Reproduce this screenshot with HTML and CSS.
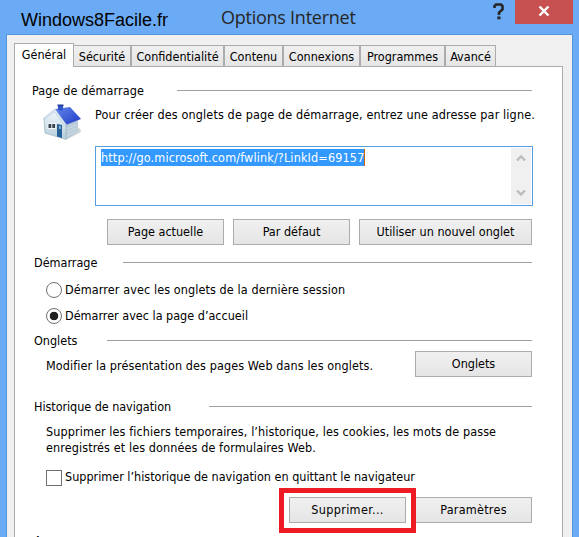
FILE: index.html
```html
<!DOCTYPE html>
<html lang="fr">
<head>
    <meta charset="UTF-8">
    <title>Options Internet</title>
    <link rel="stylesheet" href="styles.css">
</head>
<body>
    <div class="window">
        <!-- Title bar -->
        <header class="title-bar">
            <span class="site-name">Windows8Facile.fr</span>
            <span class="window-title">Options Internet</span>
            <svg class="help-icon" width="12" height="18" viewBox="0 0 12 18">
                <path d="M1.500 5V3L3 1.500h5L9.500 3v3.500L6 9.500v2.500" fill="none" stroke="#262626" stroke-width="2.600"/>
                <path d="M4.300 13.500h3.200v2.800H4.300z" fill="#262626"/>
            </svg>
            <button class="close-button">
                <svg width="12" height="10" viewBox="0 0 12 10">
                    <path d="M1.500 0.500l9 9M10.500 0.500l-9 9" stroke="#fff" stroke-width="2.400"/>
                </svg>
            </button>
        </header>

        <div class="client">
            <!-- Tabs -->
            <nav class="tabs">
                <div class="tab active"><span>Général</span></div>
                <div class="tab tab-securite"><span>Sécurité</span></div>
                <div class="tab tab-confidentialite"><span>Confidentialité</span></div>
                <div class="tab tab-contenu"><span>Contenu</span></div>
                <div class="tab tab-connexions"><span>Connexions</span></div>
                <div class="tab tab-programmes"><span>Programmes</span></div>
                <div class="tab tab-avance"><span>Avancé</span></div>
            </nav>

            <main class="panel">
                <!-- Home page -->
                <section class="group home-group">
                    <h2 class="group-title first"><span class="loose">Page de démarrage</span></h2>
                    <div class="home-row">
                        <svg class="home-icon" width="40" height="38" viewBox="0 0 40 38">
                            <defs>
                                <linearGradient id="roof" x1="0" y1="0" x2="1" y2="1">
                                    <stop offset="0" stop-color="#6488ec"/>
                                    <stop offset="1" stop-color="#1d39c4"/>
                                </linearGradient>
                                <linearGradient id="wall" x1="0" y1="0" x2="0" y2="1">
                                    <stop offset="0" stop-color="#f3f8fb"/>
                                    <stop offset="1" stop-color="#b4cdda"/>
                                </linearGradient>
                            </defs>
                            <path d="M24 36l15-8-1-4-8 3z" fill="#d0d5d8"/>
                            <path d="M24 21l12-5v12L24 35.500z" fill="#b9ccd7"/>
                            <path d="M2 15L12 6l12 15v14.500L3 29z" fill="url(#wall)" stroke="#8daabd" stroke-width=".6"/>
                            <path d="M13 5l15-2 11 12-15 6z" fill="url(#roof)"/>
                            <path d="M16 1h5v5l-2 1-3-1z" fill="#3158c8"/>
                            <path d="M15.500 0.500h6v1.800h-6z" fill="#203ca1"/>
                            <path d="M13 5L1 14.500l1 1L12.500 8 23 21.500l1.500-.8z" fill="#dbe8f5" stroke="#9db4cc" stroke-width=".4"/>
                            <path d="M5.500 19h8.500v6H5.500z" fill="#eff5f8"/>
                            <path d="M6.500 20h2.800v4H6.500zM10.300 20h2.800v4h-2.800z" fill="#34434d"/>
                            <path d="M15 20l5 1v13l-5-1.400z" fill="#275f98"/>
                            <path d="M17 22h1.800v3H17z" fill="#8cb8d6"/>
                            <path d="M25 25l10-4.500M25 28.500l10-4.500M25 32l10-5" stroke="#d3e1e8" stroke-width=".8"/>
                        </svg>
                        <p class="home-text"><span>Pour créer des onglets de page de démarrage, entrez une adresse par ligne.</span></p>
                    </div>
                    <div class="address-box">
                        <span class="address">http://go.microsoft.com/fwlink/?LinkId=69157</span>
                        <div class="scrollbar">
                            <svg width="10" height="8" viewBox="0 0 10 8"><path d="M1 6.500l4-4 4 4" fill="none" stroke="#bdbdbd" stroke-width="2.400"/></svg>
                            <svg width="10" height="8" viewBox="0 0 10 8"><path d="M1 1.500l4 4 4-4" fill="none" stroke="#bdbdbd" stroke-width="2.400"/></svg>
                        </div>
                    </div>
                    <div class="buttons">
                        <button class="btn">Page actuelle</button>
                        <button class="btn">Par défaut</button>
                        <button class="btn wide">Utiliser un nouvel onglet</button>
                    </div>
                </section>

                <!-- Startup -->
                <section class="group start-group">
                    <h2 class="group-title"><span>Démarrage</span></h2>
                    <label class="option"><i class="radio"></i><span class="loose">Démarrer avec les onglets de la dernière session</span></label>
                    <label class="option"><i class="radio checked"></i><span>Démarrer avec la page d’accueil</span></label>
                </section>

                <!-- Tabs settings -->
                <section class="group tabs-group">
                    <h2 class="group-title t-onglets"><span>Onglets</span></h2>
                    <div class="tabs-row">
                        <p><span class="loose">Modifier la présentation des pages Web dans les onglets.</span></p>
                        <button class="btn">Onglets</button>
                    </div>
                </section>

                <!-- History -->
                <section class="group history-group">
                    <h2 class="group-title t-historique"><span>Historique de navigation</span></h2>
                    <p class="history-text">
                        <span class="loose">Supprimer les fichiers temporaires, l’historique, les cookies, les mots de passe</span><br>
                        <span class="loose">enregistrés et les données de formulaires Web.</span>
                    </p>
                    <label class="option check-option"><i class="checkbox"></i><span>Supprimer l’historique de navigation en quittant le navigateur</span></label>
                    <div class="buttons history-buttons">
                        <button class="btn marked">Supprimer...</button>
                        <button class="btn spaced">Paramètres</button>
                    </div>
                </section>

                <h2 class="group-title"><span>Apparence</span></h2>
            </main>
        </div>
    </div>
</body>
</html>
```
FILE: styles.css
```css
/* Base */
*,
*::before,
*::after {
    margin: 0;
    padding: 0;
    box-sizing: border-box;
}

body {
    width: 579px;
    height: 537px;
    overflow: hidden;
    background: #6babf5;
    font-family: 'DejaVu Sans Condensed', 'DejaVu Sans', sans-serif;
    font-stretch: condensed;
    font-size: 12.5px;
    line-height: 16px;
    color: #000;
}

span {
    white-space: nowrap;
}

svg {
    display: block;
    flex-shrink: 0;
}

.window {
    height: 537px;
    overflow: hidden;
}

.loose {
    letter-spacing: 0.1px;
}

/* Title bar */
.title-bar {
    height: 34px;
    display: flex;
    align-items: flex-start;
}

.site-name {
    width: 147px;
    margin-left: 21px;
    padding-top: 8px;
    font: 18px/24px 'Liberation Sans', Arial, sans-serif;
}

.window-title {
    width: 272px;
    margin-left: 53px;
    padding-top: 5px;
    font: 18px/24px 'Open Sans', sans-serif;
    letter-spacing: -0.25px;
    color: #262626;
}

.help-icon {
    margin-top: 3px;
}

.close-button {
    width: 58px;
    height: 24px;
    margin-left: 10px;
    padding-bottom: 3px;
    display: flex;
    align-items: center;
    justify-content: center;
    border: none;
    background: #c75050;
}

/* Client area */
.client {
    height: 510px;
    margin: 0 6px;
    padding: 8px 9px 0 7px;
    border: 1px solid #5694db;
    background: #f0f0f0;
}

.tabs {
    display: flex;
    align-items: flex-end;
    height: 24px;
    margin-bottom: -1px;
    position: relative;
}

.tab {
    height: 22px;
    padding-top: 3px;
    text-align: center;
    border: 1px solid #acacac;
    border-left: none;
    background: linear-gradient(#f0f0f0, #e5e5e5);
}

.tab + .tab + .tab {
    border-left: 1px solid #acacac;
}

.tab.active {
    width: 60px;
    height: 24px;
    border-left: 1px solid #acacac;
    border-bottom: none;
    background: #fff;
}

.tab-securite { width: 57px; }
.tab-confidentialite { width: 93px; }
.tab-contenu { width: 59px; }
.tab-connexions { width: 77px; }
.tab-programmes { width: 85px; }
.tab-avance { width: 51px; }

.panel {
    height: 480px;
    padding: 15px 30px 0 19px;
    border: 1px solid #acacac;
    background: #fff;
}

/* Groups */
.group-title {
    display: flex;
    align-items: center;
    height: 17px;
    font-size: 12.5px;
    font-weight: normal;
}

.group-title span {
    width: 89px;
}

.group-title::after {
    content: "";
    flex: 1;
    height: 1px;
    background: #a0a0a0;
}

.first {
    margin-left: -2px;
}

.first span { width: 145px; }
.t-onglets span { width: 73px; }

.t-historique span {
    width: 175px;
    letter-spacing: -0.05px;
}

.home-group { height: 172px; }
.start-group { height: 78px; }
.tabs-group { height: 66px; }
.history-group { height: 134px; }

.home-row {
    display: flex;
    height: 47px;
}

.home-icon {
    margin: 5px 0 0 8px;
}

.home-text {
    margin: 8px 0 0 13px;
    letter-spacing: 0.13px;
}

.address-box {
    display: flex;
    justify-content: space-between;
    align-items: flex-start;
    width: 438px;
    height: 60px;
    margin-left: 61px;
    padding: 1px 1px 1px 5px;
    border: 1px solid #569de5;
}

.address {
    height: 17px;
    margin-top: 1px;
    line-height: 18px;
    letter-spacing: 0.15px;
    color: #fff;
    background: #3399ff;
    border-right: 1px solid #cc6600;
}

.scrollbar {
    display: flex;
    flex-direction: column;
    justify-content: space-between;
    align-items: center;
    width: 20px;
    height: 56px;
    padding: 6px 0 7px;
    background: #f0f0f0;
}

/* Buttons */
.buttons {
    display: flex;
    justify-content: flex-end;
    gap: 9px;
    margin-top: 13px;
}

.btn {
    width: 117px;
    height: 26px;
    flex-shrink: 0;
    border: 1px solid #acacac;
    background: linear-gradient(#f0f0f0, #e5e5e5);
    font: inherit;
    color: #000;
}

.btn.wide {
    width: 173px;
}

.btn.spaced {
    letter-spacing: 0.25px;
}

/* Red frame drawn over the button and its neighbour */
.marked {
    position: relative;
    letter-spacing: 0.35px;
}

.marked::after {
    content: "";
    position: absolute;
    top: -10px;
    left: -11px;
    width: 137px;
    height: 45px;
    border: 5px solid #ed1c24;
    z-index: 1;
}

/* Options */
.option {
    display: flex;
    align-items: center;
    height: 16px;
    margin: 10px 0 0 12px;
}

.start-group .group-title + .option {
    margin-top: 11px;
}

.radio,
.checkbox {
    width: 16px;
    height: 16px;
    margin-right: 3px;
    border: 1px solid #707070;
}

.radio {
    border-radius: 50%;
}

.radio.checked {
    background: radial-gradient(circle, #212121 4px, #fff 4.6px);
}

.tabs-row {
    display: flex;
    justify-content: space-between;
    margin: 2px 0 0 12px;
}

.tabs-row p {
    padding-top: 7px;
}

.history-text {
    margin: 9px 0 0 12px;
}

.check-option {
    margin-top: 14px;
}

.check-option span {
    padding-bottom: 2px;
}

.history-buttons {
    margin-top: 11px;
}
```
